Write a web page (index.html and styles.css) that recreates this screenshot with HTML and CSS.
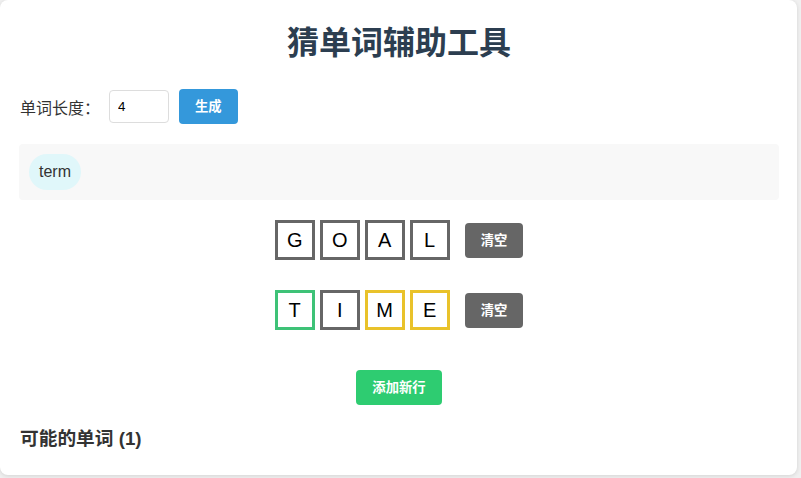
FILE: index.html
```html
<!DOCTYPE html>
<html lang="zh-CN">
<head>
<meta charset="utf-8">
<title>猜单词辅助工具</title>
<link rel="stylesheet" href="styles.css">
</head>
<body>
<div class="card">
  <h1 class="title">猜单词辅助工具</h1>
  <div class="controls">
    <label class="label" for="len">单词长度：</label>
    <input class="len-input" id="len" type="number" value="4">
    <button class="btn btn-blue">生成</button>
  </div>
  <div class="tags">
    <span class="tag">term</span>
  </div>
  <div class="rows">
    <div class="row">
      <span class="tile">G</span>
      <span class="tile">O</span>
      <span class="tile">A</span>
      <span class="tile">L</span>
      <button class="btn btn-grey">清空</button>
    </div>
    <div class="row">
      <span class="tile tile-green">T</span>
      <span class="tile">I</span>
      <span class="tile tile-yellow">M</span>
      <span class="tile tile-yellow">E</span>
      <button class="btn btn-grey">清空</button>
    </div>
  </div>
  <div class="add-wrap">
    <button class="btn btn-green">添加新行</button>
  </div>
  <h3 class="result-title">可能的单词 (1)</h3>
</div>
</body>
</html>
```
FILE: styles.css
```css
html, body {
  margin: 0;
  padding: 0;
}
body {
  background: #f0f0f0;
  font-family: "Liberation Sans", "Noto Sans CJK SC", sans-serif;
  color: #333;
  height: 478px;
  overflow: hidden;
}
.card {
  box-sizing: border-box;
  width: 797px;
  background: #fff;
  border-radius: 8px;
  box-shadow: 0 1px 4px rgba(0, 0, 0, 0.12);
  padding: 20px 18px 23px 19px;
}
.title {
  margin: 0 0 23px 0;
  text-align: center;
  font-size: 32px;
  line-height: 46px;
  font-weight: bold;
  color: #2c3e50;
}
.controls {
  display: flex;
  align-items: center;
  height: 35px;
}
.label {
  font-size: 16px;
  color: #333;
  margin-right: 9px;
  margin-left: 1px;
}
.len-input {
  box-sizing: border-box;
  width: 60px;
  height: 33px;
  border: 1px solid #ddd;
  border-radius: 4px;
  padding: 0 8px;
  font-family: "Liberation Sans", sans-serif;
  font-size: 13.333px;
  color: #000;
  margin-right: 10px;
  -moz-appearance: textfield;
}
.len-input::-webkit-outer-spin-button,
.len-input::-webkit-inner-spin-button {
  -webkit-appearance: none;
  margin: 0;
}
.btn {
  border: none;
  border-radius: 4px;
  padding: 8px 16px;
  font-family: "Liberation Sans", "Noto Sans CJK SC", sans-serif;
  font-size: 13.333px;
  line-height: 19px;
  font-weight: bold;
  color: #fff;
  cursor: pointer;
}
.btn-blue { background: #3498db; }
.btn-grey { background: #666; margin-left: 10px; }
.btn-green { background: #2ecc71; }
.tags {
  margin-top: 20px;
  background: #f8f8f8;
  border-radius: 4px;
  padding: 10px;
  display: flex;
  flex-wrap: wrap;
  gap: 8px;
}
.tag {
  background: #e0f7fa;
  color: #333;
  border-radius: 18px;
  padding: 8px 10px;
  font-size: 16px;
  line-height: 20px;
}
.rows {
  margin-top: 20px;
}
.row {
  display: flex;
  justify-content: center;
  align-items: center;
  gap: 5px;
  margin-bottom: 30px;
}
.tile {
  box-sizing: border-box;
  width: 40px;
  height: 40px;
  border: 3px solid #666;
  display: flex;
  align-items: center;
  justify-content: center;
  font-family: "Liberation Sans", sans-serif;
  font-size: 20px;
  color: #000;
}
.tile-green { border-color: #3ec277; }
.tile-yellow { border-color: #e9c22a; }
.add-wrap {
  display: flex;
  justify-content: center;
  margin-top: 40px;
}
.result-title {
  margin: 21px 0 0 1px;
  font-size: 18.72px;
  line-height: 26px;
  font-weight: bold;
  color: #333;
}
```
